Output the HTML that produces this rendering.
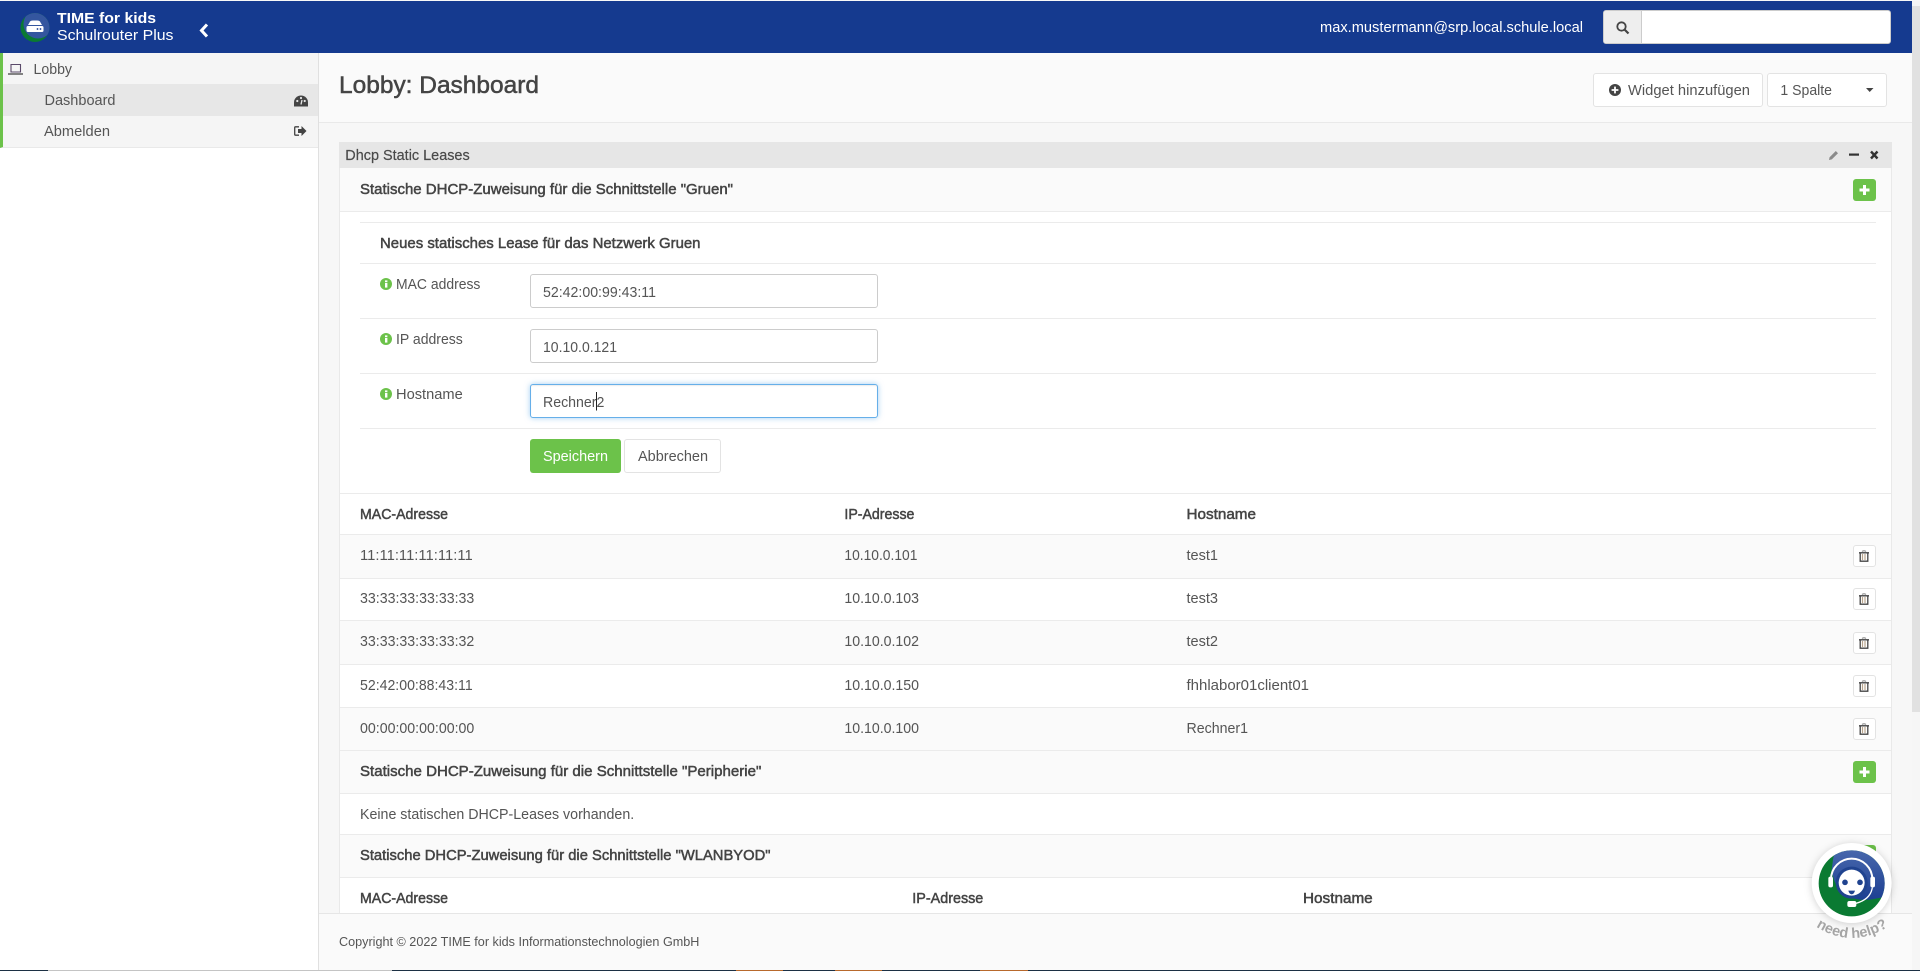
<!DOCTYPE html>
<html lang="de">
<head>
<meta charset="utf-8">
<title>Lobby: Dashboard</title>
<style>
html,body{margin:0;padding:0;width:1920px;height:971px;overflow:hidden;background:#fff}
div{position:absolute;box-sizing:border-box}
svg.o{position:absolute;left:0;top:0}
text{font-family:"Liberation Sans",sans-serif;font-size:15px;fill:#555}
.s{stroke:#444;stroke-width:.5px;fill:#444}
.h{fill:#4a4a4a;stroke:#4a4a4a;stroke-width:.2px}
.btn{background:#fff;border:1px solid #e3e3e3;border-radius:3px}
.inp{background:#fff;border:1px solid #ccc;border-radius:3px;left:530px;width:348px;height:34px}
.ln{left:360px;width:1516px;height:1px;background:#ebebeb}
.rl{left:340px;width:1551px;height:1px;background:#ebebeb}
.tb{left:1853px;width:23px;height:22px;background:#fff;border:1px solid #e3e3e3;border-radius:3px}
.pl{left:1853px;width:23px;height:22px;background:#6cc24a;border-radius:3px}
.alt{left:340px;width:1551px;background:#fafafa}
</style>
</head>
<body>
<!-- page areas -->
<div style="left:0;top:0;width:1920px;height:1px;background:#f8f8f8"></div>
<div style="left:319px;top:53px;width:1593px;height:69px;background:#fafafa"></div>
<div style="left:319px;top:122px;width:1593px;height:1px;background:#e9e9e9"></div>
<div style="left:319px;top:123px;width:1593px;height:790px;background:#f7f7f7"></div>
<div style="left:1912px;top:1px;width:8px;height:970px;background:#f6f6f6"></div>
<div style="left:1912px;top:6px;width:8px;height:706px;background:#e1e1e1"></div>
<!-- navbar -->
<div style="left:0;top:1px;width:1912px;height:52px;background:#153a8f"></div>
<div style="left:1603px;top:10px;width:288px;height:34px;background:#fff;border:1px solid #ccc;border-radius:3px"></div>
<div style="left:1604px;top:11px;width:38px;height:32px;background:#eee;border-right:1px solid #ccc;border-radius:2px 0 0 2px"></div>
<!-- sidebar -->
<div style="left:0;top:53px;width:319px;height:95px;background:#f5f5f5;border-left:3px solid #6cc24a;border-bottom:1px solid #e9e9e9"></div>
<div style="left:3px;top:84px;width:315px;height:32px;background:#e7e7e7"></div>
<div style="left:318px;top:53px;width:1px;height:917px;background:#e0e0e0"></div>
<!-- header buttons -->
<div class="btn" style="left:1593px;top:73px;width:170px;height:34px"></div>
<div class="btn" style="left:1767px;top:73px;width:120px;height:34px"></div>
<!-- widget -->
<div style="left:339px;top:142px;width:1553px;height:771px;background:#fff;border-left:1px solid #e9e9e9;border-right:1px solid #e9e9e9"></div>
<div style="left:339px;top:142px;width:1553px;height:26px;background:#e6e6e6"></div>
<div class="alt" style="top:168px;height:43px"></div>
<div class="rl" style="top:211px"></div>
<div class="ln" style="top:222px"></div>
<div class="ln" style="top:263px"></div>
<div class="ln" style="top:318px"></div>
<div class="ln" style="top:373px"></div>
<div class="ln" style="top:428px"></div>
<div class="inp" style="top:274px"></div>
<div class="inp" style="top:329px"></div>
<div class="inp" style="top:384px;border-color:#66afe9;box-shadow:inset 0 1px 1px rgba(0,0,0,.075),0 0 6px rgba(102,175,233,.6)"></div>
<div style="left:530px;top:439px;width:91px;height:34px;background:#6cc24a;border-radius:3px"></div>
<div class="btn" style="left:624px;top:439px;width:97px;height:34px"></div>
<div class="rl" style="top:493px"></div>
<div class="alt" style="top:535px;height:43px"></div>
<div class="alt" style="top:621px;height:43px"></div>
<div class="alt" style="top:708px;height:85px"></div>
<div class="alt" style="top:835px;height:42px"></div>
<div class="rl" style="top:534px"></div>
<div class="rl" style="top:578px"></div>
<div class="rl" style="top:620px"></div>
<div class="rl" style="top:664px"></div>
<div class="rl" style="top:707px"></div>
<div class="rl" style="top:750px"></div>
<div class="rl" style="top:793px"></div>
<div class="rl" style="top:834px"></div>
<div class="rl" style="top:877px"></div>
<div class="tb" style="top:545px"></div>
<div class="tb" style="top:588px"></div>
<div class="tb" style="top:632px"></div>
<div class="tb" style="top:675px"></div>
<div class="tb" style="top:718px"></div>
<div class="pl" style="top:179px"></div>
<div class="pl" style="top:761px"></div>
<div class="pl" style="top:845px"></div>
<!-- footer -->
<div style="left:319px;top:913px;width:1593px;height:57px;background:#fafafa;border-top:1px solid #e6e6e6"></div>
<!-- bottom strip -->
<div style="left:0;top:970px;width:1920px;height:1px;background:#1c3044"></div>
<div style="left:48px;top:970px;width:344px;height:1px;background:#c4c4c4"></div>
<div style="left:736px;top:970px;width:47px;height:1px;background:#b8692c"></div>
<div style="left:835px;top:970px;width:47px;height:1px;background:#b8692c"></div>
<div style="left:980px;top:970px;width:48px;height:1px;background:#b8692c"></div>

<svg class="o" width="1920" height="971" viewBox="0 0 1920 971" xmlns="http://www.w3.org/2000/svg">
<defs>
<clipPath id="c1"><circle cx="35" cy="27.5" r="14.5"/></clipPath>
<clipPath id="c2"><circle cx="125" cy="130" r="99"/></clipPath>
<linearGradient id="g1" x1="0" y1="0" x2="0" y2="1"><stop offset="0" stop-color="#4a6aae"/><stop offset="1" stop-color="#1d3f92"/></linearGradient>
<path id="arc" d="M1812 924 Q1852 952 1892 924"/>
<g id="plus"><rect x="-5" y="-1.5" width="10" height="3" fill="#fff"/><rect x="-1.5" y="-5" width="3" height="10" fill="#fff"/></g>
<g id="trash" fill="none" stroke="#444"><path d="M-5 -3.2H5" stroke-width="1.4"/><path d="M-2 -4.5Q0 -6 2 -4.5" stroke="#999" stroke-width="1.2"/><path d="M-3.8 -3V5.2H3.8V-3" stroke-width="1.3"/><path d="M-1.5 -2V4M1 -2V4" stroke="#b9a58c" stroke-width="1.2"/></g>
<g id="info"><circle cx="6" cy="6" r="6" fill="#6cc24a"/><rect x="5" y="5" width="2.4" height="4.6" fill="#fff"/><rect x="5" y="2.4" width="2.4" height="1.8" fill="#fff"/></g>
</defs>

<!-- logo -->
<g clip-path="url(#c1)">
<rect x="20" y="12" width="30" height="31" fill="#0a7a32"/>
<circle cx="38" cy="24" r="14.5" fill="#34569f"/>
</g>
<path d="M29.5 22.5Q30 20.5 33 20.5H37Q40 20.5 40.5 22.5L42 25H28Z" fill="#fff"/>
<rect x="26.5" y="26" width="17" height="6" rx="1.5" fill="#fff"/>
<circle cx="37.5" cy="29" r=".9" fill="#153a8f"/><circle cx="40.5" cy="29" r=".9" fill="#153a8f"/>
<text x="57" y="23" textLength="99" lengthAdjust="spacingAndGlyphs" style="fill:#fff;font-weight:700;font-size:15px">TIME for kids</text>
<text x="57" y="40" textLength="116.5" lengthAdjust="spacingAndGlyphs" style="fill:#fff;font-size:15px">Schulrouter Plus</text>
<path d="M207 24.5L201.5 30.5L207 36.5" fill="none" stroke="#fff" stroke-width="3"/>
<text x="1320" y="32" textLength="263" lengthAdjust="spacingAndGlyphs" style="fill:#fff">max.mustermann@srp.local.schule.local</text>
<circle cx="1621.5" cy="26.5" r="4.2" fill="none" stroke="#444" stroke-width="1.8"/><path d="M1624.5 29.5L1628.5 33.5" stroke="#444" stroke-width="2.2"/>

<!-- sidebar -->
<path d="M11 64.5H20.5V72H11Z" fill="none" stroke="#5a4a6a" stroke-width="1.1"/><path d="M8 74H23" stroke="#444" stroke-width="1.3"/>
<text x="33.5" y="74" textLength="38.5" lengthAdjust="spacingAndGlyphs">Lobby</text>
<text x="44.5" y="105" textLength="71" lengthAdjust="spacingAndGlyphs">Dashboard</text>
<path d="M294 106.5V102.5A7 7 0 0 1 308 102.5V106.5Z" fill="#444"/><circle cx="297.3" cy="101" r="1.1" fill="#e7e7e7"/><circle cx="301" cy="98" r="1.1" fill="#e7e7e7"/><circle cx="304.7" cy="101" r="1.1" fill="#e7e7e7"/><path d="M301 104.5L302 100" stroke="#e7e7e7" stroke-width="1.3"/>
<text x="44" y="136" textLength="66" lengthAdjust="spacingAndGlyphs">Abmelden</text>
<path d="M299 126.8H295.6Q294.7 126.8 294.7 127.8V134.2Q294.7 135.2 295.6 135.2H299" fill="none" stroke="#444" stroke-width="1.3"/><path d="M298 129H301.5V126L306.5 131L301.5 136V133H298Z" fill="#444"/>

<!-- header -->
<text x="339" y="93" textLength="200" lengthAdjust="spacingAndGlyphs" style="font-size:24px;stroke-width:.5px" class="s">Lobby: Dashboard</text>
<circle cx="1615" cy="90" r="6" fill="#444"/><path d="M1615 86.6V93.4M1611.6 90H1618.4" stroke="#fff" stroke-width="1.8"/>
<text x="1628" y="95" textLength="122" lengthAdjust="spacingAndGlyphs">Widget hinzufügen</text>
<text x="1780.4" y="95" textLength="51.6" lengthAdjust="spacingAndGlyphs">1 Spalte</text>
<path d="M1866 88H1873.5L1869.7 92Z" fill="#444"/>

<!-- widget -->
<text x="345.3" y="160" textLength="124.4" lengthAdjust="spacingAndGlyphs" class="h">Dhcp Static Leases</text>
<path d="M1829 160L1829.6 157.2L1835.8 151L1838 153.2L1831.8 159.4Z" fill="#8a8a8a"/>
<rect x="1849" y="153.5" width="10" height="2.2" fill="#333"/>
<path d="M1871 151.5L1877.5 158.5M1877.5 151.5L1871 158.5" stroke="#333" stroke-width="2.4"/>

<text x="360" y="194" textLength="373" lengthAdjust="spacingAndGlyphs" class="s">Statische DHCP-Zuweisung für die Schnittstelle "Gruen"</text>
<use href="#plus" x="1864.5" y="190"/>
<text x="380" y="248" textLength="320.5" lengthAdjust="spacingAndGlyphs" class="s">Neues statisches Lease für das Netzwerk Gruen</text>
<use href="#info" x="380" y="278"/>
<text x="396" y="289" textLength="84.4" lengthAdjust="spacingAndGlyphs">MAC address</text>
<use href="#info" x="380" y="333"/>
<text x="396" y="344" textLength="66.8" lengthAdjust="spacingAndGlyphs">IP address</text>
<use href="#info" x="380" y="388"/>
<text x="396" y="399" textLength="66.8" lengthAdjust="spacingAndGlyphs">Hostname</text>
<text x="543" y="297" textLength="113" lengthAdjust="spacingAndGlyphs">52:42:00:99:43:11</text>
<text x="543" y="352" textLength="74" lengthAdjust="spacingAndGlyphs">10.10.0.121</text>
<text x="543" y="407" textLength="61.4" lengthAdjust="spacingAndGlyphs">Rechner2</text>
<rect x="596" y="392" width="1" height="18.5" fill="#222"/>
<text x="543" y="461" textLength="65" lengthAdjust="spacingAndGlyphs" style="fill:#fff">Speichern</text>
<text x="638" y="461" textLength="70" lengthAdjust="spacingAndGlyphs">Abbrechen</text>

<text x="360" y="519" textLength="88" lengthAdjust="spacingAndGlyphs" class="s">MAC-Adresse</text>
<text x="844.4" y="519" textLength="70" lengthAdjust="spacingAndGlyphs" class="s">IP-Adresse</text>
<text x="1186.5" y="519" textLength="69.5" lengthAdjust="spacingAndGlyphs" class="s">Hostname</text>

<text x="360" y="560" textLength="112.7" lengthAdjust="spacingAndGlyphs">11:11:11:11:11:11</text>
<text x="844.4" y="560" textLength="73" lengthAdjust="spacingAndGlyphs">10.10.0.101</text>
<text x="1186.5" y="560" textLength="31.5" lengthAdjust="spacingAndGlyphs">test1</text>
<use href="#trash" x="1864" y="556"/>

<text x="360" y="603" textLength="114.3" lengthAdjust="spacingAndGlyphs">33:33:33:33:33:33</text>
<text x="844.4" y="603" textLength="74.6" lengthAdjust="spacingAndGlyphs">10.10.0.103</text>
<text x="1186.5" y="603" textLength="31.5" lengthAdjust="spacingAndGlyphs">test3</text>
<use href="#trash" x="1864" y="599"/>

<text x="360" y="646" textLength="114.3" lengthAdjust="spacingAndGlyphs">33:33:33:33:33:32</text>
<text x="844.4" y="646" textLength="74.6" lengthAdjust="spacingAndGlyphs">10.10.0.102</text>
<text x="1186.5" y="646" textLength="31.5" lengthAdjust="spacingAndGlyphs">test2</text>
<use href="#trash" x="1864" y="643"/>

<text x="360" y="690" textLength="112.7" lengthAdjust="spacingAndGlyphs">52:42:00:88:43:11</text>
<text x="844.4" y="690" textLength="74.6" lengthAdjust="spacingAndGlyphs">10.10.0.150</text>
<text x="1186.5" y="690" textLength="122.5" lengthAdjust="spacingAndGlyphs">fhhlabor01client01</text>
<use href="#trash" x="1864" y="686"/>

<text x="360" y="733" textLength="114.3" lengthAdjust="spacingAndGlyphs">00:00:00:00:00:00</text>
<text x="844.4" y="733" textLength="74.6" lengthAdjust="spacingAndGlyphs">10.10.0.100</text>
<text x="1186.5" y="733" textLength="61.5" lengthAdjust="spacingAndGlyphs">Rechner1</text>
<use href="#trash" x="1864" y="729"/>

<text x="360" y="776" textLength="401.3" lengthAdjust="spacingAndGlyphs" class="s">Statische DHCP-Zuweisung für die Schnittstelle "Peripherie"</text>
<use href="#plus" x="1864.5" y="772"/>
<text x="360" y="819" textLength="274.2" lengthAdjust="spacingAndGlyphs">Keine statischen DHCP-Leases vorhanden.</text>
<text x="360" y="860" textLength="410.5" lengthAdjust="spacingAndGlyphs" class="s">Statische DHCP-Zuweisung für die Schnittstelle "WLANBYOD"</text>
<text x="360" y="903" textLength="88" lengthAdjust="spacingAndGlyphs" class="s">MAC-Adresse</text>
<text x="912.3" y="903" textLength="71" lengthAdjust="spacingAndGlyphs" class="s">IP-Adresse</text>
<text x="1303" y="903" textLength="69.7" lengthAdjust="spacingAndGlyphs" class="s">Hostname</text>

<text x="339" y="946" textLength="360.4" lengthAdjust="spacingAndGlyphs" style="font-size:12.5px">Copyright © 2022 TIME for kids Informationstechnologien GmbH</text>

<!-- help badge -->
<g style="filter:drop-shadow(0 1px 4px rgba(0,0,0,.18))"><circle cx="1851.7" cy="883" r="40" fill="#fff"/></g>
<g transform="translate(1810 840) scale(.33333)">
<circle cx="125" cy="130" r="99" fill="#0a7a32"/>
<g clip-path="url(#c2)">
<path d="M75 28Q68 60 65 90Q80 190 185 178L240 168V20Z" fill="url(#g1)"/>
</g>
<circle cx="125" cy="128" r="48" fill="#20438f"/>
<circle cx="125" cy="128" r="39" fill="#fff"/>
<path d="M63 118A62 62 0 0 1 187 118" fill="none" stroke="#fff" stroke-width="6"/>
<rect x="55" y="110" width="14" height="32" rx="6" fill="#fff"/>
<rect x="181" y="110" width="14" height="32" rx="6" fill="#fff"/>
<path d="M187 142Q182 178 138 190" fill="none" stroke="#fff" stroke-width="4"/>
<rect x="112" y="183" width="27" height="18" rx="6" fill="#fff"/>
<circle cx="105" cy="127" r="8.5" fill="#20438f"/>
<circle cx="150" cy="127" r="8.5" fill="#20438f"/>
<path d="M115 152H135Q132 163 125 163Q118 163 115 152Z" fill="#20438f"/>
</g>
<text style="font-size:14.5px;font-weight:700;fill:#a5a5a5" text-anchor="middle"><textPath href="#arc" startOffset="50%">need help?</textPath></text>
</svg>
</body>
</html>
